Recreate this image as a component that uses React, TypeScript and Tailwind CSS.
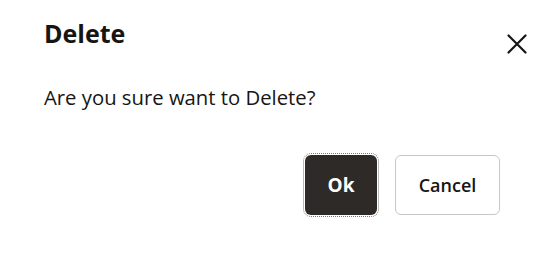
export default function App() {
  return (
    <div className="w-[541px] h-[266px] bg-white font-['Open_Sans',sans-serif] text-[#161513]">
      <div className="flex items-start justify-between pl-[44px] pr-[13px] pt-[16px]">
        <h1 className="text-[25px] leading-[34px] font-bold">Delete</h1>
        <button className="mt-[18px] mr-[1px]">
          <svg width="20" height="20" viewBox="0 0 20 20" fill="none" stroke="#161513" strokeWidth="2.2" strokeLinecap="round">
            <path d="M1.5 1.5 L18.5 18.5 M18.5 1.5 L1.5 18.5" />
          </svg>
        </button>
      </div>
      <p className="pl-[44px] mt-[29px] text-[20.3px] leading-[28px]">Are you sure want to Delete?</p>
      <div className="flex justify-end gap-[18px] pr-[41px] mt-[44px]">
        <button className="w-[72px] h-[60px] rounded-[6px] bg-[#2e2a27] text-white text-[19px] font-bold outline-1 outline-dotted outline-[#777] outline-offset-[1px]">
          Ok
        </button>
        <button className="w-[105px] h-[60px] rounded-[6px] border border-[#c9c7c5] bg-white text-[18px] font-semibold">
          Cancel
        </button>
      </div>
    </div>
  );
}
